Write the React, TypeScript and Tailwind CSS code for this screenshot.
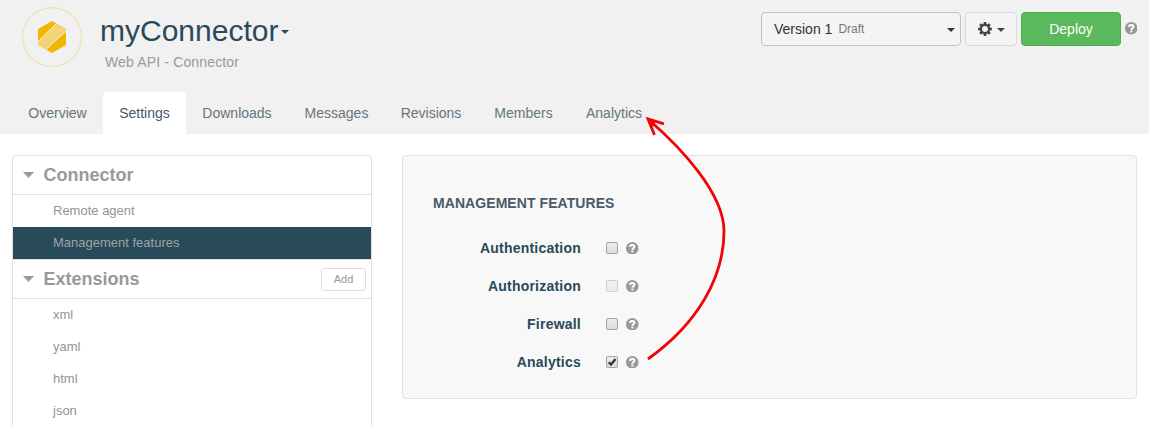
import React from "react";

const tabs = [
  { label: "Overview", w: "w-[91px]" },
  { label: "Settings", w: "w-[83px]", active: true },
  { label: "Downloads", w: "w-[102px]" },
  { label: "Messages", w: "w-[97px]" },
  { label: "Revisions", w: "w-[92px]" },
  { label: "Members", w: "w-[93px]" },
  { label: "Analytics", w: "w-[88px]" },
];

const features = [
  { label: "Authentication" },
  { label: "Authorization", disabled: true },
  { label: "Firewall" },
  { label: "Analytics", checked: true },
];

function Caret({ className = "" }: { className?: string }) {
  return (
    <svg viewBox="0 0 8 4" className={`h-1 w-2 shrink-0 ${className}`} fill="currentColor">
      <path d="M0 0h8L4 4z" />
    </svg>
  );
}

function HelpIcon() {
  return (
    <svg viewBox="0 0 12 12" className="h-[12.5px] w-[12.5px] shrink-0">
      <circle cx="6" cy="6" r="6" fill="#999" />
      <path d="M3.800 4.700C4 2.300 8.100 2.500 8.100 4.600 8.100 5.900 6.100 5.800 6.100 7.400" fill="none" stroke="#fff" strokeWidth="1.900" />
      <rect x="5.100" y="8.200" width="2" height="1.800" fill="#fff" />
    </svg>
  );
}

function GearIcon() {
  return (
    <svg viewBox="-7 -7 14 14" className="h-3.5 w-3.5" fill="#444">
      {[0, 45, 90, 135].map((a) => (
        <path key={a} d="M-1.3-6.900h2.600l.3 2.800h-3.200zM-1.300 6.900h2.600l.3-2.800h-3.200z" transform={`rotate(${a})`} />
      ))}
      <circle r="4" fill="none" stroke="#444" strokeWidth="2.100" />
    </svg>
  );
}

function Checkbox({ checked, disabled }: { checked?: boolean; disabled?: boolean }) {
  return (
    <span
      role="checkbox"
      aria-checked={!!checked}
      className={`flex h-3 w-3 items-center justify-center rounded-[2px] border bg-linear-to-b ${
        disabled ? "border-[#d0d0d0] from-[#f0f0f0] to-[#ebebeb]" : "border-[#a4a4a4] from-[#ededed] to-[#dcdcdc]"
      }`}
    >
      {checked && (
        <svg viewBox="0 0 10 10" className="h-2.5 w-2.5 shrink-0">
          <path d="M1.7 5.2 4 7.5 8.5 2" fill="none" stroke="#333" strokeWidth="2.300" />
        </svg>
      )}
    </span>
  );
}

function SectionHead({ title, children }: { title: string; children?: React.ReactNode }) {
  return (
    <div className="flex h-[39px] items-center border-b border-[#e1e1e1] pr-[5px] pl-[10px] text-[#999]">
      <svg viewBox="0 0 11 6" className="h-1.5 w-[11px]" fill="currentColor">
        <path d="M0 0h11L5.5 6z" />
      </svg>
      <h2 className="ml-[9.5px] flex-1 text-[18px] leading-none font-bold">{title}</h2>
      {children}
    </div>
  );
}

function Item({ label, active }: { label: string; active?: boolean }) {
  return (
    <div
      className={`flex h-8 items-center pl-10 text-[13px] ${
        active ? "bg-[#294a58] text-[#9aa5aa]" : "text-[#949494]"
      }`}
    >
      {label}
    </div>
  );
}

export default function App() {
  return (
    <div className="relative h-[427px] w-[1149px] overflow-hidden bg-white font-['Liberation_Sans',Arial,sans-serif] text-sm">
      <header className="flex h-[134px] flex-col justify-between bg-[#f1f1f1]">
        <div className="flex items-start pl-[22px]">
          <svg viewBox="0 0 60 60" className="mt-[7px] h-[60px] w-[60px]">
            <circle cx="30" cy="30" r="29.4" fill="none" stroke="#eee0b0" strokeWidth="1.1" />
            <path d="M30 14 44 22v16L30 46 16 38V22z" fill="#f2b600" />
            <path d="M34.3 16.5 44 22v2.3L23.8 42.5 16 38v-3.5z" fill="#f2d478" />
            <path d="M35 16 15.5 35M44.5 23.5 23 43.5" stroke="#fdf6dc" strokeWidth=".9" />
          </svg>
          <div className="ml-[18px] pt-[14px]">
            <div className="flex items-center text-[#294a58]">
              <h1 className="text-[30px] leading-[34px]">myConnector</h1>
              <Caret className="mt-0.5 ml-[3px]" />
            </div>
            <p className="mt-[5px] pl-[5px] leading-[18px] tracking-[0.15px] text-[#999]">Web API - Connector</p>
          </div>
          <div className="ml-auto flex items-start pt-3 pr-3">
            <div className="flex h-[34px] w-[200px] items-center rounded-[4px] border border-[#c3c3c3] bg-[#f4f4f4] pr-[5px] pl-3 text-[#333]">
              <span>Version 1</span>
              <span className="ml-[6px] flex-1 text-xs text-[#777]">Draft</span>
              <Caret className="mt-0.5" />
            </div>
            <div className="ml-1 flex h-[34px] w-[52px] items-center rounded-[4px] border border-[#d9d9d9] bg-[#f4f4f4] pl-[11.500px] text-[#444]">
              <GearIcon />
              <Caret className="mt-0.5 ml-[5px]" />
            </div>
            <div className="ml-1 flex h-[34px] w-[100px] items-center justify-center rounded-[4px] border border-[#4cae4c] bg-[#5cb85c] text-white">
              Deploy
            </div>
            <div className="mt-[10px] ml-[3.500px]">
              <HelpIcon />
            </div>
          </div>
        </div>
        <nav className="flex pl-3">
          {tabs.map((t) => (
            <div
              key={t.label}
              className={`flex h-[42px] items-center justify-center rounded-t-[4px] ${t.w} ${
                t.active ? "bg-white text-[#45596a]" : "text-[#66757b]"
              }`}
            >
              {t.label}
            </div>
          ))}
        </nav>
      </header>

      <main className="flex items-start gap-[30px] pt-[21px] pl-3">
        <aside className="h-[290px] w-[360px] rounded-t-[4px] border border-[#e1e1e1]">
          <SectionHead title="Connector" />
          <Item label="Remote agent" />
          <Item label="Management features" active />
          <div className="border-t border-[#e1e1e1]">
            <SectionHead title="Extensions">
              <div className="flex h-[23px] w-[45px] items-center justify-center rounded-[3px] border border-[#ddd] pt-px text-[11px]">
                Add
              </div>
            </SectionHead>
          </div>
          <Item label="xml" />
          <Item label="yaml" />
          <Item label="html" />
          <Item label="json" />
        </aside>

        <section className="h-[244px] w-[735px] rounded-[4px] border border-[#e1e1e1] bg-[#f8f8f8] pl-[30px]">
          <h3 className="mt-[38px] leading-[18px] font-bold tracking-[0.07px] text-[#4b596a]">MANAGEMENT FEATURES</h3>
          <div className="mt-[17px]">
            {features.map((f) => (
              <div key={f.label} className="flex h-[38px] items-center">
                <span className="w-[148px] text-right font-bold tracking-[0.22px] text-[#294a58]">{f.label}</span>
                <span className="ml-[25px]">
                  <Checkbox checked={f.checked} disabled={f.disabled} />
                </span>
                <span className="ml-2">
                  <HelpIcon />
                </span>
              </div>
            ))}
          </div>
        </section>
      </main>

      <svg
        viewBox="0 0 110 260"
        className="pointer-events-none absolute top-[110px] left-[635px] h-[260px] w-[110px]"
        fill="none"
        stroke="#f00505"
        strokeWidth="2.8"
      >
        <path d="M13 249C62 214 89 168 89 121C89 83 45 37 14 10" />
        <path d="M29 13.800 13 9 19.500 25" />
        <path d="M12 8 21 11 18 17z" fill="#f00505" stroke="none" />
      </svg>
    </div>
  );
}
